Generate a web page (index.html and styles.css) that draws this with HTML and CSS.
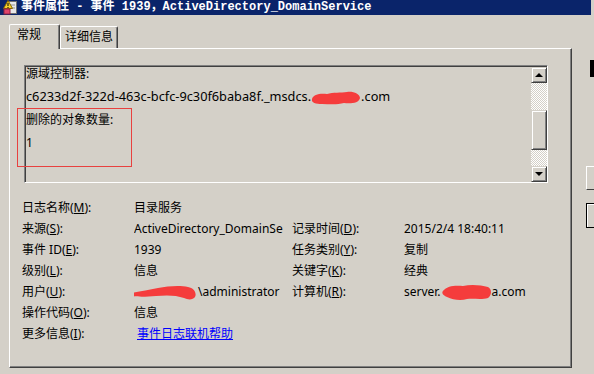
FILE: index.html
```html
<!DOCTYPE html>
<html lang="zh-CN">
<head>
  <meta charset="UTF-8">
  <title>事件属性</title>
  <link rel="stylesheet" href="styles.css">
</head>
<body>
  <div class="window">
    <div class="titlebar">
      <svg class="app-icon" width="16" height="15" viewBox="0 0 16 15">
        <rect x="6.5" y="1.5" width="8" height="12" fill="#e8e8e8" stroke="#707070"/>
        <line x1="8" y1="5" x2="13" y2="5" stroke="#909090"/>
        <line x1="8" y1="8" x2="13" y2="8" stroke="#909090"/>
        <path d="M6 0.5 L10.5 8.5 L1.5 8.5 Z" fill="#f5d22c" stroke="#8a6a00"/>
        <rect x="5.5" y="3" width="1" height="3" fill="#000"/>
        <rect x="5.5" y="7" width="1" height="1" fill="#000"/>
        <rect x="2" y="9" width="6" height="5" fill="#e0446a" stroke="#902040"/>
      </svg>
      <span class="title">事件属性 - 事件 1939，ActiveDirectory_DomainService</span>
    </div>

    <div class="tabs">
      <div class="tab active">常规</div>
      <div class="tab">详细信息</div>
    </div>

    <div class="panel">
      <div class="desc-box">
        <div class="desc-text">
          <p>源域控制器:</p>
          <p class="guid">c6233d2f-322d-463c-bcfc-9c30f6baba8f._msdcs.<svg class="blob" width="50" height="14" viewBox="0 0 50 14"><path d="M1 8 C2 3 10 2 16 3 C22 1 30 2 36 1 C42 0 49 3 49 7 C48 12 40 13 33 12 C26 14 18 13 11 13 C5 13 0 12 1 8 Z" fill="#f53c3c"/></svg>.com</p>
          <p>删除的对象数量:</p>
          <p>1</p>
        </div>
        <div class="vscroll">
          <div class="sb-btn"><span class="arrow-up"></span></div>
          <div class="sb-track"><div class="sb-thumb"></div></div>
          <div class="sb-btn"><span class="arrow-down"></span></div>
        </div>
      </div>

      <!-- Annotation drawn over the screenshot. -->
      <div class="highlight"></div>

      <div class="props">
        <div class="lbl">日志名称(<u>M</u>):</div>
        <div class="val wide">目录服务</div>

        <div class="lbl">来源(<u>S</u>):</div>
        <div class="val">ActiveDirectory_DomainSe</div>
        <div class="lbl">记录时间(<u>D</u>):</div>
        <div class="val">2015/2/4 18:40:11</div>

        <div class="lbl">事件 ID(<u>E</u>):</div>
        <div class="val">1939</div>
        <div class="lbl">任务类别(<u>Y</u>):</div>
        <div class="val">复制</div>

        <div class="lbl">级别(<u>L</u>):</div>
        <div class="val">信息</div>
        <div class="lbl">关键字(<u>K</u>):</div>
        <div class="val">经典</div>

        <div class="lbl">用户(<u>U</u>):</div>
        <div class="val"><svg class="blob user-blob" width="68" height="16" viewBox="0 0 68 16"><path d="M1 8 C8 7 18 5 28 3 C38 1 50 0 58 2 C64 3 67 8 65 12 C63 15 58 15 54 13 C46 10 36 10 26 11 C16 12 6 12 2 11 C0 10 0 9 1 8 Z" fill="#f53c3c"/></svg>\administrator</div>
        <div class="lbl">计算机(<u>R</u>):</div>
        <div class="val">server.<svg class="blob" width="51" height="17" viewBox="0 0 51 17"><path d="M3 6 C6 2 14 1 22 2 C30 0 40 1 47 3 C51 5 51 11 47 14 C40 16 32 14 26 15 C20 17 12 16 6 13 C1 11 0 8 3 6 Z" fill="#f53c3c"/></svg>a.com</div>

        <div class="lbl">操作代码(<u>O</u>):</div>
        <div class="val wide">信息</div>

        <div class="lbl">更多信息(<u>I</u>):</div>
        <div class="val wide"><a class="help-link" href="#">事件日志联机帮助</a></div>
      </div>
    </div>
  </div>

  <!-- Bits of the window behind, at the right edge. -->
  <div class="behind behind-bar"></div>
  <div class="behind behind-btn"></div>
  <div class="behind behind-btn default"></div>
</body>
</html>
```

FILE: styles.css
```css
/**
 * Base.
 */
* {
  box-sizing: border-box;
}
body {
  position: relative;
  width: 594px;
  height: 374px;
  margin: 0;
  overflow: hidden;
  color: #000;
  background-color: #d4d0c8;
  font-family: 'Noto Sans', 'Noto Sans CJK SC', sans-serif;
  font-size: 12px;
}
p {
  margin: 0;
}

/**
 * Title bar.
 */
.window {
  width: 591px;
}
.titlebar {
  display: flex;
  align-items: center;
  height: 15px;
  background-color: #0a246a;
}
.app-icon {
  margin-left: 2px;
  flex: none;
}
.title {
  margin-left: 3px;
  color: #fff;
  font-family: 'Liberation Mono', 'Noto Sans CJK SC', monospace;
  font-weight: bold;
  font-size: 12px;
  line-height: 15px;
  white-space: nowrap;
}

/**
 * Tabs.
 */
.tabs {
  display: flex;
  align-items: flex-end;
  height: 33px;
  padding-left: 9px;
}
.tab {
  height: 22px;
  padding: 3px 0 0 4px;
  line-height: 14px;
  border-top: 1px solid #fff;
  border-left: 1px solid #fff;
  border-right: 1px solid #404040;
  border-radius: 2px 2px 0 0;
  box-shadow: inset -1px 0 #808080;
  width: 58px;
}
.tab.active {
  position: relative;
  z-index: 1;
  width: 51px;
  height: 25px;
  margin-bottom: -1px;
  padding-left: 7px;
  background-color: #d4d0c8;
}

/**
 * Tab page.
 */
.panel {
  position: relative;
  width: 563px;
  height: 320px;
  margin-left: 9px;
  padding: 16px 0 0 12px;
  border-top: 1px solid #fff;
  border-left: 1px solid #fff;
  border-right: 1px solid #404040;
  border-bottom: 1px solid #404040;
  box-shadow: inset -1px -1px #808080;
}

/**
 * Read-only description box with its scrollbar.
 */
.desc-box {
  display: flex;
  width: 524px;
  height: 118px;
  margin-left: 2px;
  overflow: hidden;
  border-top: 1px solid #808080;
  border-left: 1px solid #808080;
  border-right: 1px solid #fff;
  border-bottom: 1px solid #fff;
  box-shadow: inset 1px 1px #404040;
}
.desc-text {
  flex: 1;
  margin-top: -4px;
  padding-left: 1px;
  line-height: 23px;
  white-space: nowrap;
}
.guid {
  font-size: 12.75px;
}
.blob {
  vertical-align: middle;
}
.vscroll {
  display: flex;
  flex-direction: column;
  width: 16px;
  flex: none;
  margin: 1px 0 0 0;
}
.sb-btn {
  display: flex;
  align-items: center;
  justify-content: center;
  height: 16px;
  background-color: #d4d0c8;
  border-top: 1px solid #d4d0c8;
  border-left: 1px solid #d4d0c8;
  border-right: 1px solid #404040;
  border-bottom: 1px solid #404040;
  box-shadow: inset 1px 1px #fff, inset -1px -1px #808080;
}
.arrow-up,
.arrow-down {
  width: 0;
  height: 0;
  border-left: 4px solid transparent;
  border-right: 4px solid transparent;
}
.arrow-up {
  border-bottom: 4px solid #000;
}
.arrow-down {
  border-top: 4px solid #000;
}
.sb-track {
  flex: 1;
  padding-top: 27px;
  background: repeating-conic-gradient(#fff 0 25%, #d4d0c8 0 50%) 0 0 / 2px 2px;
}
.sb-thumb {
  height: 40px;
  background-color: #d4d0c8;
  border-top: 1px solid #d4d0c8;
  border-left: 1px solid #d4d0c8;
  border-right: 1px solid #404040;
  border-bottom: 1px solid #404040;
  box-shadow: inset 1px 1px #fff, inset -1px -1px #808080;
}

.highlight {
  position: absolute;
  left: 7px;
  top: 59px;
  width: 115px;
  height: 59px;
  border: 1px solid #e8413f;
}

/**
 * Property grid.
 */
.props {
  display: grid;
  grid-template-columns: 112px 158px 112px 1fr;
  grid-auto-rows: 21px;
  align-items: center;
  margin-top: 14px;
  line-height: 21px;
}
.lbl,
.val {
  white-space: nowrap;
}
.val {
  overflow: hidden;
  margin-right: 9px;
}
.val.wide {
  grid-column: span 3;
}
.user-blob {
  margin-left: -4px;
}
.help-link {
  padding-left: 3px;
  color: #0000ff;
  text-decoration: underline;
}

/**
 * Window behind.
 */
.behind {
  position: absolute;
}
.behind-bar {
  left: 590px;
  top: 60px;
  width: 4px;
  height: 17px;
  background-color: #000;
}
.behind-btn {
  left: 586px;
  top: 166px;
  width: 10px;
  height: 24px;
  border-top: 1px solid #fff;
  border-left: 1px solid #fff;
  border-bottom: 1px solid #404040;
}
.behind-btn.default {
  top: 203px;
  height: 25px;
  border: 1px solid #000;
  box-shadow: inset 1px 1px #fff;
}
```
